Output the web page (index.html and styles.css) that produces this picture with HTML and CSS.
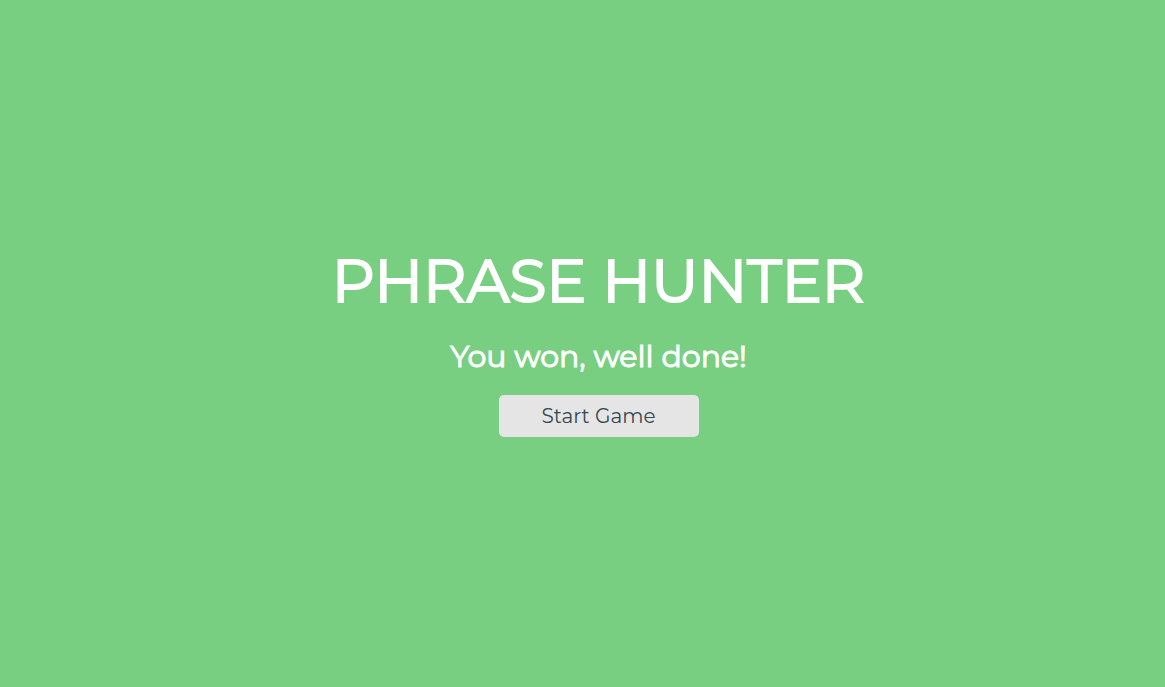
FILE: index.html
```html
<!DOCTYPE html>
<html lang="en">
<head>
<meta charset="utf-8">
<title>Phrase Hunter</title>
<link rel="stylesheet" href="styles.css">
</head>
<body>
<main class="overlay">
<h2 class="title">PHRASE HUNTER</h2>
<h1 class="message">You won, well done!</h1>
<button class="start" type="button">Start Game</button>
</main>
</body>
</html>
```

FILE: styles.css
```css
* { box-sizing: border-box; }
body {
  margin: 0;
  background: #78cf82;
  font-family: Montserrat, Inter, sans-serif;
}
.overlay {
  min-height: 100vh;
  display: flex;
  flex-direction: column;
  align-items: center;
  justify-content: center;
  padding: 0 0 6px 32px;
  color: #fff;
}
.title {
  margin: 0 0 22px;
  font-size: 60px;
  line-height: 72px;
  font-weight: 400;
  -webkit-text-stroke: 2px #fff;
}
.message {
  margin: 0 0 20px;
  font-size: 30px;
  line-height: 36px;
  font-weight: 400;
  -webkit-text-stroke: 1px #fff;
}
.start {
  width: 200px;
  height: 42px;
  border: 0;
  border-radius: 5px;
  background: #e5e5e5;
  color: #37474f;
  font: 400 20px/24px Montserrat, Inter, sans-serif;
  cursor: pointer;
}
```
